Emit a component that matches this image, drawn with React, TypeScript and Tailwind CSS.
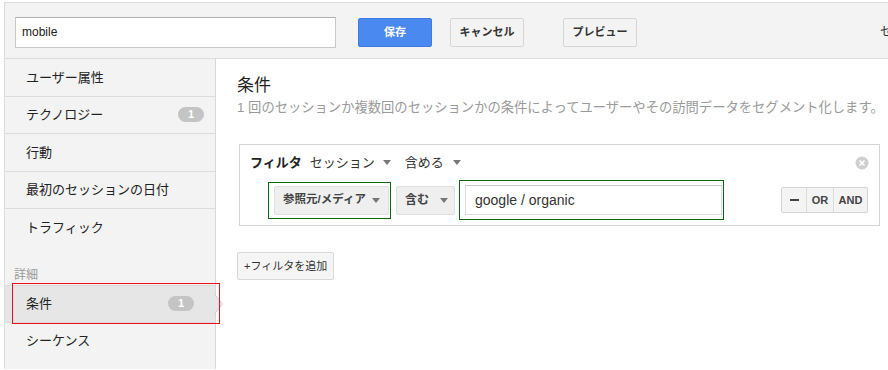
import React from "react";

const font = "font-['Liberation_Sans','Noto_Sans_CJK_JP',sans-serif]";

const navItems = [
    { label: "ユーザー属性" },
    { label: "テクノロジー", badge: 1 },
    { label: "行動" },
    { label: "最初のセッションの日付" },
    { label: "トラフィック", last: true },
];

const Caret = () => (
    <svg width="8" height="5" viewBox="0 0 8 5" className="block shrink-0">
        <path d="M0 0 L8 0 L4 5 Z" fill="#777" />
    </svg>
);

const Badge = ({ n }: { n: number }) => (
    <span className="inline-block shrink-0 w-[26px] h-[15px] rounded-full bg-[#c4c4c4] text-white text-[11px] font-bold leading-[15px] text-center">
        {n}
    </span>
);

const TopBar = () => (
    <div className="h-[57px] bg-[#f3f3f3] border-t border-b border-[#dcdcdc] flex items-center pl-[10px] pt-[3px]">
        <div className="w-[321px] h-[31px] bg-white border border-[#c8c8c8] border-t-[#b0b0b0] pl-[6px] flex items-center text-[12px] text-[#222]">
            mobile
        </div>
        <button className="ml-[22px] w-[74px] h-[29px] rounded-[2px] bg-[#4a89f0] border border-[#3d7be0] text-white text-[11px] font-bold">
            保存
        </button>
        <button className="ml-[18px] w-[74px] h-[29px] rounded-[2px] bg-[#f3f3f3] border border-[#d6d6d6] text-[#333] text-[11px] font-bold">
            キャンセル
        </button>
        <button className="ml-[39px] w-[74px] h-[29px] rounded-[2px] bg-[#f3f3f3] border border-[#d6d6d6] text-[#333] text-[11px] font-bold">
            プレビュー
        </button>
        <span className="ml-auto mr-[-4px] text-[12px] text-[#333]">セ</span>
    </div>
);

const Sidebar = () => (
    <div className="relative w-[211px] shrink-0 bg-[#f3f3f3] border-r border-[#d8d8d8] text-[13px] text-[#222]">
        {navItems.map((item) => (
            <div
                key={item.label}
                className={`h-[37.5px] flex items-center pl-[21px] pr-[11px] ${item.last ? "" : "border-b border-[#dcdcdc]"}`}
            >
                <span>{item.label}</span>
                {item.badge && (
                    <span className="ml-auto flex">
                        <Badge n={item.badge} />
                    </span>
                )}
            </div>
        ))}
        <div className="pl-[9px] pt-[19px] h-[38px] text-[12px] text-[#9a9a9a]">詳細</div>
        <div className="relative h-[38px] flex items-center pl-[21px] pr-[21px] bg-[#e6e6e6] border-t border-b border-[#dadada]">
            <span>条件</span>
            <span className="ml-auto flex">
                <Badge n={1} />
            </span>
            <svg width="10" height="20" viewBox="0 0 10 20" className="absolute right-[-9px] top-[8px]">
                <path d="M0 0 L8 10 L0 20 Z" fill="#e6e6e6" />
                <path d="M0.5 0 L8.5 10 L0.5 20" fill="none" stroke="#d0d0d0" />
            </svg>
        </div>
        <div className="h-[37px] flex items-center pl-[21px]">シーケンス</div>
        {/* red annotation frame */}
        <div className="absolute z-10 left-[7px] top-[224px] w-[208px] h-[41px] shadow-[inset_0_0_0_1px_#ee1111]" />
    </div>
);

const FilterBox = () => (
    <div className="mt-[26px] ml-[2px] w-[641px] h-[82px] border border-[#d4d4d4] bg-white">
        <div className="flex items-center h-[31px] pt-[4px] pl-[10px] pr-[10px]">
            <span className="text-[13px] font-bold text-[#222]">フィルタ</span>
            <span className="ml-[8px] text-[13px] text-[#333]">セッション</span>
            <span className="ml-[8px]"><Caret /></span>
            <span className="ml-[14px] text-[13px] text-[#333]">含める</span>
            <span className="ml-[9px]"><Caret /></span>
            <svg width="14" height="14" viewBox="0 0 14 14" className="ml-auto">
                <circle cx="7" cy="7" r="6.5" fill="#cfcfcf" />
                <path d="M4.5 4.5 L9.5 9.5 M9.5 4.5 L4.5 9.5" stroke="#fff" strokeWidth="1.6" />
            </svg>
        </div>
        <div className="flex items-center pl-[28px] pr-[11px] mt-[4px]">
            <div className="w-[123px] h-[37px] border border-[#0b6a0b] flex items-center pl-[5px]">
                <div className="w-[115px] h-[29px] bg-[#efefef] border border-[#e0e0e0] rounded-[2px] flex items-center pl-[8px] pr-[8px] text-[11.5px] font-bold text-[#444]">
                    <span>参照元/メディア</span>
                    <span className="ml-auto"><Caret /></span>
                </div>
            </div>
            <div className="ml-[5px] w-[59px] h-[29px] bg-[#efefef] border border-[#e0e0e0] rounded-[2px] flex items-center pl-[8px] pr-[6px] text-[12px] font-bold text-[#444]">
                <span>含む</span>
                <span className="ml-auto"><Caret /></span>
            </div>
            <div className="ml-[4px] w-[265px] h-[40px] border border-[#0b6a0b] flex items-center pl-[5px]">
                <div className="w-[257px] h-[30px] bg-white border border-[#dcdcdc] border-t-[#c8c8c8] flex items-center pl-[9px] text-[14px] text-[#333]">
                    google / organic
                </div>
            </div>
            <div className="ml-auto flex h-[26px] border border-[#d4d4d4] rounded-[2px] bg-[#f4f4f4] text-[11px] font-bold text-[#444]">
                <div className="w-[25px] flex items-center justify-center border-r border-[#dcdcdc]">
                    <span className="w-[9px] h-[2px] bg-[#444]" />
                </div>
                <div className="w-[27px] flex items-center justify-center border-r border-[#dcdcdc]">OR</div>
                <div className="w-[33px] flex items-center justify-center">AND</div>
            </div>
        </div>
    </div>
);

const App = () => {
    return (
        <div className={`w-[888px] h-[370px] overflow-hidden bg-white pt-[2px] pl-[4px] ${font}`}>
            <div className="border-l border-[#dcdcdc]">
                <TopBar />
                <div className="flex h-[310px]">
                    <Sidebar />
                    <div className="pl-[21px] pt-[15px]">
                        <h1 className="text-[17px] text-[#222] leading-[24px]">条件</h1>
                        <p className="text-[13.3px] text-[#9a9a9a] leading-[20px] whitespace-nowrap">
                            1 回のセッションか複数回のセッションかの条件によってユーザーやその訪問データをセグメント化します。
                        </p>
                        <FilterBox />
                        <button className="mt-[26px] h-[28px] px-[6px] bg-[#f5f5f5] border border-[#d8d8d8] rounded-[2px] text-[11px] text-[#333]">
                            +フィルタを追加
                        </button>
                    </div>
                </div>
            </div>
        </div>
    );
};

export default App;
